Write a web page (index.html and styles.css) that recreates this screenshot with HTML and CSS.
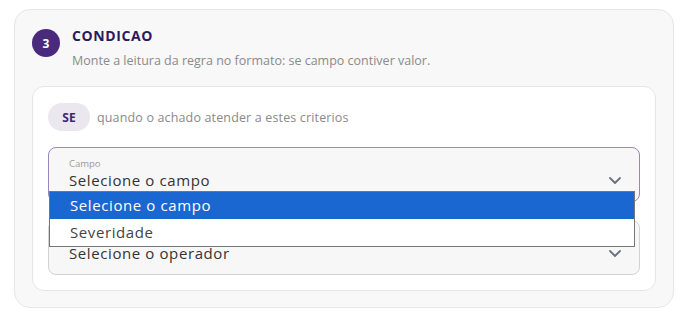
FILE: index.html
```html
<!DOCTYPE html>
<html lang="pt">
<head>
<meta charset="utf-8">
<link rel="stylesheet" href="styles.css">
</head>
<body>
<section class="card">
  <header class="head">
    <span class="step">3</span>
    <div class="head-text">
      <h2 class="title">CONDICAO</h2>
      <p class="subtitle">Monte a leitura da regra no formato: se campo contiver valor.</p>
    </div>
  </header>
  <div class="inner">
    <div class="se-row">
      <span class="pill">SE</span>
      <span class="se-text">quando o achado atender a estes criterios</span>
    </div>
    <div class="fields">
      <div class="select select-active">
        <div class="select-body">
          <span class="select-label">Campo</span>
          <span class="select-value">Selecione o campo</span>
        </div>
        <svg class="chev" width="12" height="7" viewBox="0 0 12 7"><path d="M1 1l5 5 5-5" fill="none" stroke="#6b7280" stroke-width="1.8" stroke-linecap="round" stroke-linejoin="round"/></svg>
        <ul class="menu">
          <li class="opt opt-sel">Selecione o campo</li>
          <li class="opt">Severidade</li>
        </ul>
      </div>
      <div class="select">
        <div class="select-body">
          <span class="select-label select-label-empty"></span>
          <span class="select-value">Selecione o operador</span>
        </div>
        <svg class="chev" width="12" height="7" viewBox="0 0 12 7"><path d="M1 1l5 5 5-5" fill="none" stroke="#6b7280" stroke-width="1.8" stroke-linecap="round" stroke-linejoin="round"/></svg>
      </div>
    </div>
  </div>
</section>
</body>
</html>
```

FILE: styles.css
```css
* { box-sizing: border-box; }
html, body { margin: 0; padding: 0; background: #ffffff; }
body {
  font-family: "Open Sans", "DejaVu Sans", sans-serif;
  padding: 9px 6px 0 14px;
}
.card {
  width: 660px;
  height: 299px;
  background: #f8f8f8;
  border: 1px solid #e7e7e7;
  border-radius: 16px;
  padding: 19px 17px 16px 17px;
}
.head {
  display: flex;
  align-items: flex-start;
  gap: 12px;
}
.step {
  flex: none;
  width: 28px;
  height: 28px;
  border-radius: 50%;
  background: #4a2a7c;
  color: #fff;
  font-weight: 700;
  font-size: 12px;
  display: flex;
  align-items: center;
  justify-content: center;
}
.title {
  margin: -2px 0 0 0;
  font-size: 14px;
  line-height: 18px;
  font-weight: 700;
  color: #2b1b5c;
  letter-spacing: 0.6px;
}
.subtitle {
  margin: 7px 0 0 0;
  font-size: 12.5px;
  line-height: 18px;
  color: #8a8a8a;
}
.inner {
  margin-top: 16px;
  background: #ffffff;
  border: 1px solid #e6e6e6;
  border-radius: 12px;
  padding: 16px 15px 15px 15px;
}
.se-row {
  display: flex;
  align-items: center;
  gap: 7px;
}
.pill {
  width: 42px;
  height: 28px;
  border-radius: 14px;
  background: #eae7ef;
  color: #3d2670;
  font-weight: 700;
  font-size: 12px;
  display: flex;
  align-items: center;
  justify-content: center;
}
.se-text {
  font-size: 12.5px;
  letter-spacing: 0.15px;
  color: #8a8a8a;
}
.fields {
  margin-top: 16px;
  display: flex;
  flex-direction: column;
  gap: 18px;
}
.select {
  position: relative;
  height: 55px;
  border: 1px solid #d2d2d2;
  border-radius: 8px;
  background: #f7f7f7;
  display: flex;
  align-items: flex-start;
  padding: 0 18px 0 20px;
}
.select-active { border-color: #9a85bd; }
.select-body {
  flex: 1;
  display: flex;
  flex-direction: column;
  padding-top: 9px;
}
.select-label {
  font-size: 9.5px;
  line-height: 13px;
  height: 13px;
  color: #9a9a9a;
}
.select-value {
  font-size: 15px;
  line-height: 20px;
  letter-spacing: 0.6px;
  color: #333333;
}
.chev {
  margin-top: 29px;
}
.menu {
  position: absolute;
  left: 0;
  top: 43px;
  width: 586px;
  margin: 0;
  padding: 0;
  list-style: none;
  background: #ffffff;
  border: 1px solid #767676;
  z-index: 2;
}
.opt {
  height: 27px;
  line-height: 27px;
  padding-left: 20px;
  font-size: 15px;
  letter-spacing: 0.6px;
  color: #444444;
}
.opt-sel {
  background: #1a67d2;
  color: #ffffff;
}
```
